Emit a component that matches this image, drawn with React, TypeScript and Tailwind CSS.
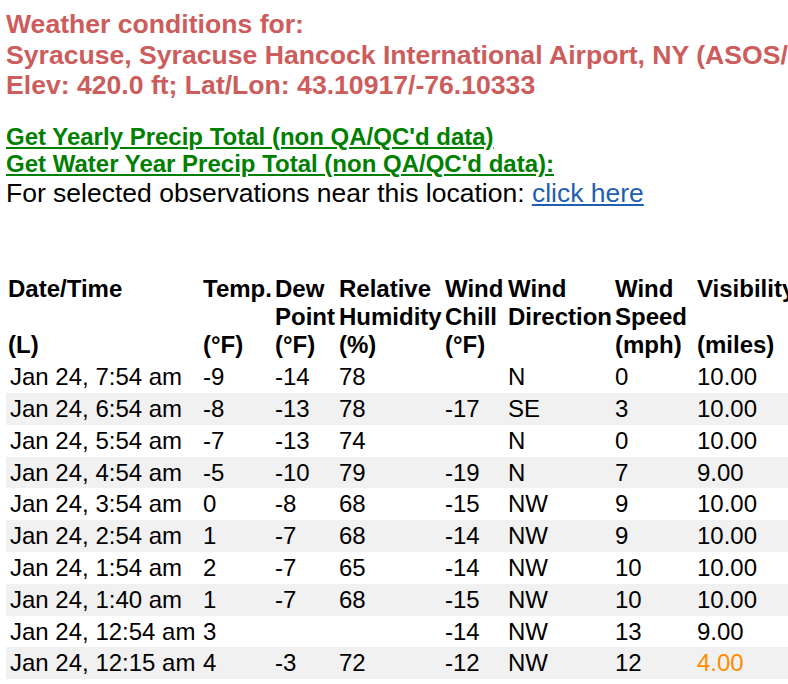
const rows: string[][] = [
  ["Jan 24, 7:54 am", "-9", "-14", "78", "", "N", "0", "10.00"],
  ["Jan 24, 6:54 am", "-8", "-13", "78", "-17", "SE", "3", "10.00"],
  ["Jan 24, 5:54 am", "-7", "-13", "74", "", "N", "0", "10.00"],
  ["Jan 24, 4:54 am", "-5", "-10", "79", "-19", "N", "7", "9.00"],
  ["Jan 24, 3:54 am", "0", "-8", "68", "-15", "NW", "9", "10.00"],
  ["Jan 24, 2:54 am", "1", "-7", "68", "-14", "NW", "9", "10.00"],
  ["Jan 24, 1:54 am", "2", "-7", "65", "-14", "NW", "10", "10.00"],
  ["Jan 24, 1:40 am", "1", "-7", "68", "-15", "NW", "10", "10.00"],
  ["Jan 24, 12:54 am", "3", "", "", "-14", "NW", "13", "9.00"],
  ["Jan 24, 12:15 am", "4", "-3", "72", "-12", "NW", "12", "4.00"],
];

// header cells: lines joined with <br>, empty string = blank line
const headers: string[][] = [
  ["Date/Time", "", "(L)"],
  ["Temp.", "", "(°F)"],
  ["Dew", "Point", "(°F)"],
  ["Relative", "Humidity", "(%)"],
  ["Wind", "Chill", "(°F)"],
  ["Wind", "Direction", ""],
  ["Wind", "Speed", "(mph)"],
  ["Visibility", "", "(miles)"],
];

const widths = ["w-[195px]", "w-[72px]", "w-[64px]", "w-[106px]", "w-[63px]", "w-[107px]", "w-[82px]", "w-[120px]"];

export default function App() {
  return (
    <div className="w-[788px] h-[684px] overflow-hidden bg-white pl-[6px] font-['Liberation_Sans',Arial,sans-serif] text-black">
      <div className="pt-[9px] text-[26.6px] leading-[30.5px] font-bold text-[#cd5c5c] whitespace-nowrap">
        Weather conditions for:
        <br />
        Syracuse, Syracuse Hancock International Airport, NY (ASOS/AWOS)
        <br />
        Elev: 420.0 ft; Lat/Lon: 43.10917/-76.10333
      </div>

      <div className="mt-[22px] text-[24px] leading-[27.6px] whitespace-nowrap">
        <a href="#" className="font-bold text-[#008000] underline">
          Get Yearly Precip Total (non QA/QC'd data)
        </a>
        <br />
        <a href="#" className="font-bold text-[#008000] underline">
          Get Water Year Precip Total (non QA/QC'd data):
        </a>
      </div>
      <div className="text-[26.5px] leading-[30.5px] whitespace-nowrap">
        For selected observations near this location:{" "}
        <a href="#" className="text-[#1f5fb2] underline">
          click here
        </a>
      </div>

      <table className="mt-[65px] w-[809px] table-fixed border-collapse text-[24px]">
        <colgroup>
          {widths.map((w, i) => (
            <col key={i} className={w} />
          ))}
        </colgroup>
        <thead>
          <tr>
            {headers.map((h, i) => (
              <th key={i} className="p-[2px] text-left align-top font-bold leading-[28px] whitespace-nowrap">
                {h.map((line, j) => (
                  <span key={j}>
                    {line}
                    {j < h.length - 1 && <br />}
                  </span>
                ))}
              </th>
            ))}
          </tr>
        </thead>
        <tbody>
          {rows.map((r, i) => (
            <tr key={i} className={i % 2 === 1 ? "bg-[#f1f1f1]" : ""}>
              {r.map((c, j) => (
                <td
                  key={j}
                  className={`py-[2px] pr-[2px] leading-[27.8px] whitespace-nowrap ${j === 0 ? "pl-[4px]" : "pl-[2px]"} ${
                    j === 7 && c === "4.00" ? "text-[#ff8c00]" : ""
                  }`}
                >
                  {c}
                </td>
              ))}
            </tr>
          ))}
        </tbody>
      </table>
    </div>
  );
}
